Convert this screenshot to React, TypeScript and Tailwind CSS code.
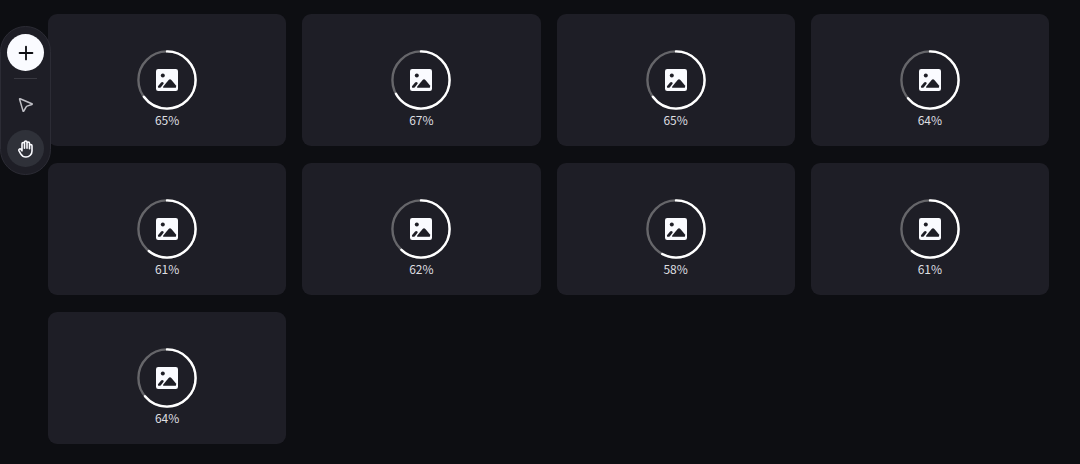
import { Plus } from "lucide-react";

const uploads = [
  { id: 1, percent: 65 },
  { id: 2, percent: 67 },
  { id: 3, percent: 65 },
  { id: 4, percent: 64 },
  { id: 5, percent: 61 },
  { id: 6, percent: 62 },
  { id: 7, percent: 58 },
  { id: 8, percent: 61 },
  { id: 9, percent: 64 },
];

function ImageIcon() {
  return (
    <svg viewBox="0 0 22 22" className="size-[22px]" aria-hidden="true">
      <rect width="22" height="22" rx="2.2" fill="#fafbff" />
      <circle cx="6.8" cy="6.5" r="2" fill="#1e1e26" />
      <path
        d="M7.6 18.7Q6.6 18.6 7.1 17.7L12.6 11Q14 9.6 15.4 11L19.8 16.2Q20.6 17.4 19.8 18.7Z"
        fill="#1e1e26"
      />
      <path
        d="M2.2 18.7Q1.6 17.8 2.2 17L4.9 13.7Q5.8 12.9 6.8 13.2 8 13.6 7.6 14.8L4.9 18.3 4.2 18.7Z"
        fill="#1e1e26"
      />
    </svg>
  );
}

function ProgressRing({ percent }: { percent: number }) {
  return (
    <div className="grid size-[60px] place-items-center">
      <svg viewBox="0 0 60 60" className="col-start-1 row-start-1 size-[60px] -rotate-90" fill="none" strokeWidth="2.4">
        <circle cx="30" cy="30" r="28.6" stroke="#66666a" />
        <circle
          cx="30"
          cy="30"
          r="28.6"
          stroke="#ffffff"
          pathLength="100"
          strokeDasharray={`${percent} 100`}
          strokeLinecap="round"
        />
      </svg>
      <div className="col-start-1 row-start-1">
        <ImageIcon />
      </div>
    </div>
  );
}

function UploadCard({ percent }: { percent: number }) {
  return (
    <div className="flex h-[132px] flex-col items-center rounded-[9px] bg-[#1e1e26] pt-9">
      <ProgressRing percent={percent} />
      <span className="text-xs leading-5 text-[#dedee0]">{percent}%</span>
    </div>
  );
}

function Toolbar() {
  return (
    <div className="absolute top-[26px] left-0 flex flex-col items-center gap-[7px] rounded-full border border-[#2c2c35] bg-[#1e1e26] px-1.5 py-[7px]">
      <button aria-label="Add" className="grid size-[37px] place-items-center rounded-full bg-[#fafbff] text-[#0d0e12]">
        <Plus size={22} strokeWidth={2} />
      </button>
      <div className="h-px w-[23px] bg-[#383840]" />
      <button aria-label="Select" className="grid size-[37px] place-items-center rounded-full text-[#c0c0c6]">
        <svg viewBox="0 0 16 16" className="size-4" fill="none" stroke="currentColor" strokeWidth="1.5" strokeLinejoin="round">
          <path d="M2.1 1.8Q1.4 1.5 1.6 2.3L5 13.9Q5.3 14.7 5.8 14L8.3 9.7Q8.5 9.3 9 9.1L13.9 7.5Q14.7 7.1 13.9 6.7Z" />
        </svg>
      </button>
      <button aria-label="Pan" className="grid size-[37px] place-items-center rounded-full bg-[#2f3139] text-[#fafbff]">
        <svg viewBox="0 0 18 18" className="size-[18px]" fill="none" stroke="currentColor" strokeWidth="1.6" strokeLinecap="round" strokeLinejoin="round">
          <path d="M5 10.5V3.8a1.25 1.25 0 0 1 2.5 0V8.2M7.5 8.2V2.3a1.25 1.25 0 0 1 2.5 0V8.2M10 8.2V3.2a1.25 1.25 0 0 1 2.5 0V8.8M12.5 8.8V5.7a1.25 1.25 0 0 1 2.5 0V11a6 6 0 0 1-6 6C6 17 4.8 15.7 3.7 13.8L1.9 10.6a1.2 1.2 0 0 1 2-1.3L5 10.8" />
        </svg>
      </button>
    </div>
  );
}

export default function App() {
  return (
    <main className="relative min-h-screen bg-[#0d0e12] pt-3.5 pr-[31px] pb-5 pl-12 font-['Noto_Sans_CJK_SC',sans-serif]">
      <div className="grid grid-cols-[repeat(auto-fill,minmax(220px,1fr))] gap-x-4 gap-y-[17px]">
        {uploads.map((u) => (
          <UploadCard key={u.id} percent={u.percent} />
        ))}
      </div>
      <Toolbar />
    </main>
  );
}
